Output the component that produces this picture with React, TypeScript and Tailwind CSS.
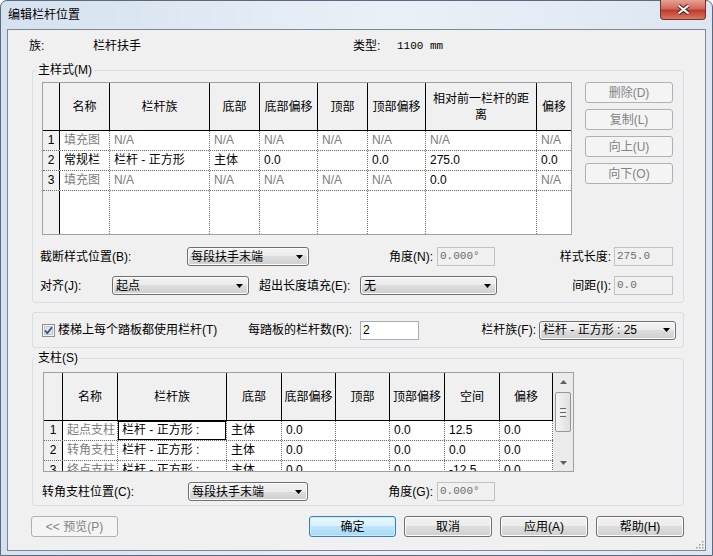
import type { ReactNode } from "react";

type C = [string, boolean?];

const t1Widths = ["w-[17px]", "w-[50px]", "w-[100px]", "w-[50px]", "w-[58px]", "w-[50px]", "w-[58px]", "w-[111px]", "w-[34px]"];
const t1Heads: ReactNode[] = ["名称", "栏杆族", "底部", "底部偏移", "顶部", "顶部偏移", <>相对前一栏杆的距<br />离</>, "偏移"];
const t1Rows: C[][] = [
  [["填充图", true], ["N/A", true], ["N/A", true], ["N/A", true], ["N/A", true], ["N/A", true], ["N/A", true], ["N/A", true]],
  [["常规栏"], ["栏杆 - 正方形"], ["主体"], ["0.0"], [""], ["0.0"], ["275.0"], ["0.0"]],
  [["填充图", true], ["N/A", true], ["N/A", true], ["N/A", true], ["N/A", true], ["N/A", true], ["0.0"], ["N/A", true]],
];

const t2Widths = ["w-[19px]", "w-[55px]", "w-[109px]", "w-[55px]", "w-[54px]", "w-[54px]", "w-[55px]", "w-[55px]", "w-[53px]"];
const t2Heads: ReactNode[] = ["名称", "栏杆族", "底部", "底部偏移", "顶部", "顶部偏移", "空间", "偏移"];
const t2Rows: C[][] = [
  [["起点支柱", true], ["栏杆 - 正方形 :"], ["主体"], ["0.0"], [""], ["0.0"], ["12.5"], ["0.0"]],
  [["转角支柱", true], ["栏杆 - 正方形 :"], ["主体"], ["0.0"], [""], ["0.0"], ["0.0"], ["0.0"]],
  [["终点支柱", true], ["栏杆 - 正方形 :"], ["主体"], ["0.0"], [""], ["0.0"], ["-12.5"], ["0.0"]],
];

const dot = "border-r border-dotted border-[#6e6e6e]";

function Grid({ widths, heads, rows, edge, sel, filler }: { widths: string[]; heads: ReactNode[]; rows: C[][]; edge?: boolean; sel?: boolean; filler?: boolean }) {
  const [rw, ...cw] = widths;
  const last = heads.length - 1;
  return (
    <>
      <div className="flex h-[48px] shrink-0 border-b border-black">
        <div className={`${rw} h-full bg-[#f0f0f0] border-r border-black`} />
        {heads.map((h, i) => (
          <div key={i} className={`${cw[i]} h-full bg-[#f0f0f0] flex items-center justify-center text-center leading-[16px] ${i < last || edge ? "border-r border-black" : ""}`}>
            {h}
          </div>
        ))}
      </div>
      {rows.map((r, ri) => (
        <div key={ri} className="flex h-[20px] shrink-0 border-b border-dotted border-[#6e6e6e]">
          <div className={`${rw} h-full bg-[#f0f0f0] border-r border-black text-center leading-[19px]`}>{ri + 1}</div>
          {r.map(([t, g], ci) => (
            <div
              key={ci}
              className={`${cw[ci]} h-full pl-[4px] leading-[19px] whitespace-nowrap overflow-hidden bg-white ${g ? "text-[#7d7d7d]" : ""} ${ci < last || edge ? dot : ""} ${sel && ri === 0 && ci === 1 ? "shadow-[inset_0_0_0_1px_#000]" : ""}`}
            >
              {t}
            </div>
          ))}
        </div>
      ))}
      {filler && (
        <div className="flex h-[43px]">
          <div className={`${rw} h-full bg-[#f0f0f0] border-r border-black`} />
          {cw.map((w, ci) => (
            <div key={ci} className={`${w} h-full bg-white ${ci < last ? dot : ""}`} />
          ))}
        </div>
      )}
    </>
  );
}

function Btn({ children, className = "", kind = "normal" }: { children: ReactNode; className?: string; kind?: "normal" | "disabled" | "default" }) {
  const look =
    kind === "disabled"
      ? "border-[#adb2b5] bg-[#f4f4f4] text-[#838383]"
      : kind === "default"
      ? "border-[#3c7fb1] bg-[linear-gradient(#eaf6fd_0%,#d9f0fc_50%,#bee6fd_50%,#a7d9f5_100%)] shadow-[inset_0_0_0_1px_#c8ecfd]"
      : "border-[#707070] bg-[linear-gradient(#f2f2f2_0%,#ebebeb_50%,#dddddd_50%,#cfcfcf_100%)] shadow-[inset_0_0_0_1px_#fcfcfc]";
  return <div className={`h-[21px] shrink-0 rounded-[3px] border flex items-center justify-center ${look} ${className}`}>{children}</div>;
}

function Arrow({ up, color = "#000" }: { up?: boolean; color?: string }) {
  return (
    <svg width="7" height="4" viewBox="0 0 7 4">
      <path d={up ? "M3.5 0L7 4H0z" : "M0 0h7L3.5 4z"} fill={color} />
    </svg>
  );
}

function Combo({ text, className }: { text: string; className: string }) {
  return (
    <div className={`h-[19px] shrink-0 flex items-center justify-between rounded-[3px] border border-[#707070] bg-[linear-gradient(#f2f2f2_0%,#ebebeb_50%,#dddddd_50%,#cfcfcf_100%)] shadow-[inset_0_0_0_1px_#fcfcfc] pl-[3px] pr-[5px] whitespace-nowrap ${className}`}>
      <span>{text}</span>
      <Arrow />
    </div>
  );
}

function Field({ text, className, on }: { text: string; className: string; on?: boolean }) {
  return (
    <div
      className={`h-[19px] shrink-0 border pl-[2px] leading-[17px] ${on ? "bg-white border-[#abadb3] font-['Liberation_Sans',sans-serif]" : "bg-[#f0f0f0] border-[#c2c2c2] text-[#6d6d6d] font-['Liberation_Mono',monospace] text-[11px]"} ${className}`}
    >
      {text}
    </div>
  );
}

function Check() {
  return (
    <svg width="13" height="13" viewBox="0 0 13 13">
      <rect x="0.5" y="0.5" width="12" height="12" fill="#f4f4f4" stroke="#8e8f8f" />
      <rect x="2.5" y="2.5" width="8" height="8" fill="#e2e2e2" stroke="#c6c6c6" />
      <path d="M3 6.5L5.3 9.2L10 3.2" fill="none" stroke="#2c4f9e" strokeWidth="1.8" />
    </svg>
  );
}

export default function App() {
  return (
    <div className="w-[713px] h-[556px] flex flex-col border border-[#5b6a7c] rounded-t-[7px] bg-[linear-gradient(to_right,#d5e1ef,#eaf0f7_55%,#dde6f1)] font-['Liberation_Sans','Noto_Sans_CJK_SC',sans-serif] text-[12px] leading-[16px] text-black">
      {/* title bar */}
      <div className="h-[28px] flex justify-between shrink-0">
        <span className="self-center pl-[7px]">编辑栏杆位置</span>
        <div className="mr-[6px] mt-[-1px] w-[46px] h-[20px] rounded-b-[4px] border border-t-0 border-[#7a2e26] bg-[linear-gradient(#e6a193,#d0695b_45%,#bf3b2c_55%,#d47a63)] flex items-center justify-center">
          <svg width="15" height="11" viewBox="0 0 15 11">
            <path d="M2.5 1.5L12.5 9.5M12.5 1.5L2.5 9.5" stroke="#4d1a14" strokeWidth="4" />
            <path d="M2.5 1.5L12.5 9.5M12.5 1.5L2.5 9.5" stroke="#fff" strokeWidth="2.2" />
          </svg>
        </div>
      </div>

      {/* client */}
      <div className="mx-[6px] h-[522px] shrink-0 border border-[#7d8895] bg-[#f0f0f0] relative flex flex-col">
        <div className="mt-[8px] h-[16px] flex items-center whitespace-nowrap">
          <span className="ml-[21px] w-[64px]">族:</span>
          <span className="w-[260px]">栏杆扶手</span>
          <span className="w-[44px]">类型:</span>
          <span className="font-['Liberation_Mono',monospace] text-[11px]">1100 mm</span>
        </div>

        {/* main style */}
        <fieldset className="mt-[8px] ml-[24px] w-[652px] min-w-0 border border-[#d5dfe5] rounded-[3px] pt-[4px] pb-[7px]">
          <legend className="ml-[3px] px-[2px] leading-[16px]">主样式(M)</legend>
          <div className="flex">
            <div className="ml-[9px] w-[530px] h-[153px] border border-[#a0a0a0] flex flex-col overflow-hidden">
              <Grid widths={t1Widths} heads={t1Heads} rows={t1Rows} filler />
            </div>
            <div className="ml-[13px] flex flex-col gap-[6px]">
              <Btn kind="disabled" className="w-[88px]">删除(D)</Btn>
              <Btn kind="disabled" className="w-[88px]">复制(L)</Btn>
              <Btn kind="disabled" className="w-[88px]">向上(U)</Btn>
              <Btn kind="disabled" className="w-[88px]">向下(O)</Btn>
            </div>
          </div>
          <div className="mt-[12px] h-[19px] flex items-center whitespace-nowrap">
            <span className="ml-[7px] w-[147px]">截断样式位置(B):</span>
            <Combo text="每段扶手末端" className="w-[122px]" />
            <span className="w-[128px] text-right pr-[4px]">角度(N):</span>
            <Field text="0.000°" className="w-[58px]" />
            <span className="w-[119px] text-right pr-[3px]">样式长度:</span>
            <Field text="275.0" className="w-[59px]" />
          </div>
          <div className="mt-[10px] h-[19px] flex items-center whitespace-nowrap">
            <span className="ml-[7px] w-[72px]">对齐(J):</span>
            <Combo text="起点" className="w-[137px]" />
            <span className="w-[111px] pl-[10px]">超出长度填充(E):</span>
            <Combo text="无" className="w-[137px]" />
            <span className="w-[117px] text-right pr-[3px]">间距(I):</span>
            <Field text="0.0" className="w-[59px]" />
          </div>
        </fieldset>

        {/* per tread */}
        <div className="mt-[9px] ml-[24px] w-[652px] h-[36px] border border-[#d5dfe5] rounded-[3px] flex items-center whitespace-nowrap">
          <div className="ml-[9px] w-[206px] flex items-center gap-[3px]">
            <Check />
            <span>楼梯上每个踏板都使用栏杆(T)</span>
          </div>
          <span className="w-[112px]">每踏板的栏杆数(R):</span>
          <Field on text="2" className="w-[59px] h-[18px]" />
          <span className="w-[120px] text-right pr-[3px]">栏杆族(F):</span>
          <Combo text="栏杆 - 正方形 : 25" className="w-[137px]" />
        </div>

        {/* posts */}
        <fieldset className="mt-[2px] ml-[24px] w-[652px] min-w-0 border border-[#d5dfe5] rounded-[3px] pt-[6px] pb-[4px]">
          <legend className="ml-[3px] px-[2px] leading-[16px]">支柱(S)</legend>
          <div className="ml-[10px] w-[531px] h-[100px] border border-[#a0a0a0] flex">
            <div className="w-[509px] h-[98px] flex flex-col overflow-hidden">
              <Grid widths={t2Widths} heads={t2Heads} rows={t2Rows} edge sel />
            </div>
            <div className="w-[20px] h-[98px] bg-[#ebebeb] flex flex-col items-center">
              <div className="h-[17px] flex items-center justify-center">
                <Arrow up color="#5f5f5f" />
              </div>
              <div className="mt-[2px] w-[16px] h-[40px] rounded-[2px] border border-[#979797] bg-[linear-gradient(to_right,#f4f4f4,#dedede)] flex flex-col items-center justify-center gap-[1px]">
                <div className="w-[6px] h-px bg-[#6a6a6a]" />
                <div className="w-[6px] h-px bg-[#f8f8f8]" />
                <div className="w-[6px] h-px bg-[#6a6a6a]" />
                <div className="w-[6px] h-px bg-[#f8f8f8]" />
                <div className="w-[6px] h-px bg-[#6a6a6a]" />
              </div>
              <div className="flex-1" />
              <div className="h-[17px] flex items-center justify-center">
                <Arrow color="#5f5f5f" />
              </div>
            </div>
          </div>
          <div className="mt-[10px] h-[19px] flex items-center whitespace-nowrap">
            <span className="ml-[9px] w-[146px]">转角支柱位置(C):</span>
            <Combo text="每段扶手末端" className="w-[120px]" />
            <span className="w-[129px] text-right pr-[4px]">角度(G):</span>
            <Field text="0.000°" className="w-[58px]" />
          </div>
        </fieldset>

        {/* buttons */}
        <div className="mt-[10px] flex">
          <Btn kind="disabled" className="ml-[23px] w-[87px]">&lt;&lt; 预览(P)</Btn>
          <Btn kind="default" className="ml-[191px] w-[87px]">确定</Btn>
          <Btn className="ml-[8px] w-[88px]">取消</Btn>
          <Btn className="ml-[8px] w-[88px]">应用(A)</Btn>
          <Btn className="ml-[8px] w-[88px]">帮助(H)</Btn>
        </div>

        <svg className="absolute right-[1px] bottom-[1px]" width="10" height="10" viewBox="0 0 10 10">
          {[
            [8, 2],
            [8, 5],
            [5, 5],
            [8, 8],
            [5, 8],
            [2, 8],
          ].map(([x, y], i) => (
            <rect key={i} x={x} y={y} width="1.5" height="1.5" fill="#9aa0a6" />
          ))}
        </svg>
      </div>
    </div>
  );
}
